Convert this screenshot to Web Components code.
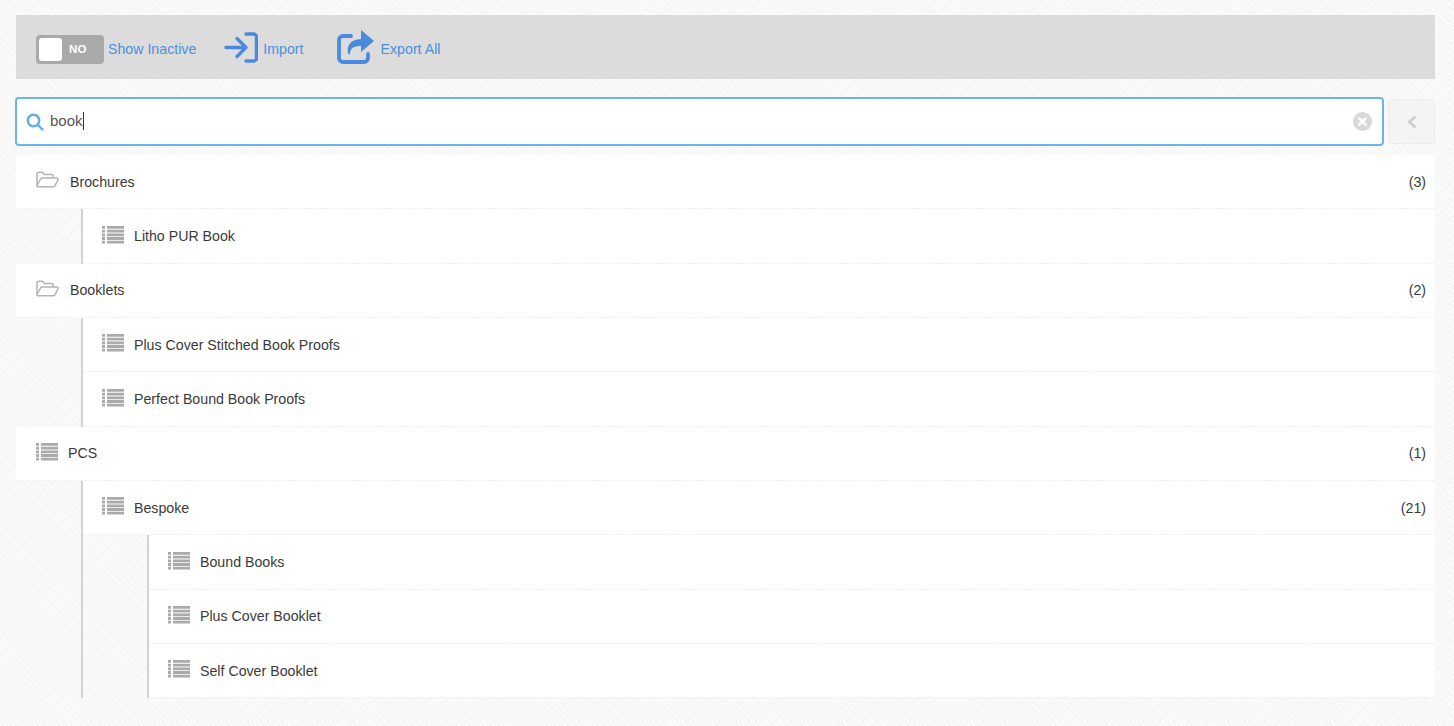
<!DOCTYPE html>
<html lang="en"><head><meta charset="utf-8"><title>Tree</title>
<style>
html,body{margin:0;height:100%}
body{height:726px;overflow:hidden;font:14px "Liberation Sans",Arial,sans-serif;color:#333;
background-color:#f8f8f8;background-image:repeating-linear-gradient(45deg,rgba(255,255,255,.55) 0 1px,transparent 1px 5px),repeating-linear-gradient(135deg,#fafafa 0 1px,#f4f4f4 1px 2px,#f9f9f9 2px 3px);}
app-shell{padding:15px 19px 0 16px}
</style></head><body>
<app-shell>
  <app-toolbar>
    <app-toggle></app-toggle>
    <app-action kind="show" label="Show Inactive"></app-action>
    <app-action kind="import" label="Import"></app-action>
    <app-action kind="export" label="Export All"></app-action>
  </app-toolbar>
  <app-search value="book"></app-search>
  <app-tree>
    <app-item icon="folder" label="Brochures" count="(3)" top>
      <app-item icon="list" label="Litho PUR Book"></app-item>
    </app-item>
    <app-item icon="folder" label="Booklets" count="(2)" top>
      <app-item icon="list" label="Plus Cover Stitched Book Proofs"></app-item>
      <app-item icon="list" label="Perfect Bound Book Proofs"></app-item>
    </app-item>
    <app-item icon="list" label="PCS" count="(1)" top>
      <app-item icon="list" label="Bespoke" count="(21)">
        <app-item icon="list" label="Bound Books"></app-item>
        <app-item icon="list" label="Plus Cover Booklet"></app-item>
        <app-item icon="list" label="Self Cover Booklet"></app-item>
      </app-item>
    </app-item>
  </app-tree>
</app-shell>
<script>
const def=(name,html,extra)=>{customElements.define(name,class extends HTMLElement{
  constructor(){super();this.attachShadow({mode:'open'}).innerHTML=html;}
  connectedCallback(){extra&&extra.call(this,this.shadowRoot);}
});};
const listIcon=`<svg width="22" height="18" viewBox="0 0 22 18" fill="#aaa"><path d="M0 0h3v2.800H0zM5 0h17v2.800H5zM0 3.700h3v2.800H0zM5 3.700h17v2.800H5zM0 7.400h3v2.800H0zM5 7.400h17v2.800H5zM0 11.100h3v2.800H0zM5 11.100h17v2.800H5zM0 14.800h3v2.800H0zM5 14.800h17v2.800H5z"/></svg>`;
const folderIcon=`<svg width="23" height="18" viewBox="0 0 23 18" fill="none" stroke="#b3b3b3" stroke-width="1.500" stroke-linejoin="round"><path d="M1 14.500V3a1.800 1.800 0 0 1 1.800-1.800h3.700l1.800 2.300h7a1.800 1.800 0 0 1 1.800 1.800v1.500"/><path d="M1 14.500 4.600 8a1.800 1.800 0 0 1 1.600-1h14.300c1.300 0 2 1 1.400 2l-3 5.800a2 2 0 0 1-1.700 1H2.400c-1 0-1.700-.7-1.400-1.300z"/></svg>`;
def('app-shell',`<style>:host{display:flex;flex-direction:column}</style><slot></slot>`);
def('app-toolbar',`<style>:host{display:flex;align-items:center;box-sizing:border-box;height:64px;background:#dcdcdc;padding:4px 0 0 20px}</style><slot></slot>`);
def('app-toggle',`<style>:host{display:flex;align-items:center;box-sizing:border-box;width:68px;height:29px;background:#a9a9a9;border-radius:4px;padding-left:3px}
.k{width:23px;height:23px;background:#fff;border-radius:3px}
.t{margin-left:7px;font:bold 11.500px "Liberation Sans",Arial,sans-serif;color:#fff;letter-spacing:.3px}</style><div class="k"></div><span class="t">NO</span>`);
const icons={
 import:`<svg width="35" height="31" viewBox="0 0 35 31" fill="none" stroke="#4a8ade" stroke-width="3.400" stroke-linecap="round" stroke-linejoin="round"><path d="M3 15.500h19M14 6.500l9 9-9 9"/><path d="M23 2h7.500a3 3 0 0 1 3 3v21a3 3 0 0 1-3 3H23"/></svg>`,
 export:`<svg width="38" height="34" viewBox="0 0 38 34" fill="none"><path d="M14 6H6a4 4 0 0 0-4 4v18a4 4 0 0 0 4 4h21a4 4 0 0 0 4-4v-4" stroke="#4a8ade" stroke-width="3.800" stroke-linecap="round"/><path fill="#4a8ade" d="M24 0l13 11-13 11v-6c-7 0-11 2-11 8-.6.900-1.500.500-2-1-1.500-8 3-13.500 13-14z"/></svg>`};
def('app-action',`<style>:host{display:flex;align-items:center;color:#4d8fe0;font-size:14.200px}
:host([kind=show]){margin-left:4px;margin-right:27px}
:host([kind=import]){margin-right:33px}
.i{display:flex}:host([kind=import]) .i{margin-right:5px}:host([kind=export]) .i{margin-right:6px}
:host([kind=export]) .i{margin-top:-4px}:host([kind=import]) .i{margin-top:-4px}</style><span class="i"></span><span class="l"></span>`,function(r){
  r.querySelector('.l').textContent=this.getAttribute('label');
  r.querySelector('.i').innerHTML=icons[this.getAttribute('kind')]||'';});
def('app-search',`<style>:host{display:flex;align-items:center;gap:4px;margin:18px 0 0 -1px;height:49px}
.box{flex:1;box-sizing:border-box;height:49px;display:flex;align-items:center;background:#fff;border:2px solid #6db3ec;border-radius:4px;padding:0 10px 0 9px}
.v{margin:-2px 0 0 6px;font-size:15px;color:#555;flex:1;display:flex;align-items:center}
.c{width:1px;height:18px;background:#333}
.b{box-sizing:border-box;width:47px;height:45px;border:1px solid #ececec;border-radius:3px;display:flex;align-items:center;justify-content:center;background:rgba(240,240,240,.55)}</style>
<div class="box"><svg width="18" height="18" viewBox="0 0 18 18" fill="none" stroke="#62ade8" stroke-width="2.400" stroke-linecap="round"><circle cx="7.500" cy="7.500" r="5.700"/><path d="M12 12l4.500 4.500"/></svg>
<span class="v"><span id="t"></span><span class="c"></span></span>
<svg width="19" height="19" viewBox="0 0 19 19"><circle cx="9.500" cy="9.500" r="9.500" fill="#d9d9d9"/><path d="M6.300 6.300l6.400 6.400M12.700 6.300l-6.400 6.400" stroke="#fff" stroke-width="2.600" stroke-linecap="round"/></svg></div>
<div class="b"><svg width="10" height="14" viewBox="0 0 10 14" fill="none" stroke="#cfcfcf" stroke-width="3"><path d="M8.500 1.500 2.500 7l6 5.500"/></svg></div>`,function(r){r.getElementById('t').textContent=this.getAttribute('value');});
def('app-tree',`<style>:host{display:block;margin-top:9px}</style><slot></slot>`);
def('app-item',`<style>:host{display:block}
.row{box-sizing:border-box;height:54.350px;display:flex;align-items:center;background:#fff;background-clip:padding-box;padding:0 9px 0 19px;border-bottom:1px dotted #f0f0f0;font-size:14.200px;color:#3a3a3a}
:host([top]) .row{padding-left:20px}
.i{display:flex;margin-right:10px;margin-top:-3px}
.i.folder{margin-right:11px}
.l{flex:1}
.kids{margin-left:64px;border-left:2px solid #d2d2d2}
:host([top]) .kids{margin-left:65px}
.kids.e{display:none}</style>
<div class="row"><span class="i"></span><span class="l"></span><span class="n"></span></div>
<div class="kids"><slot></slot></div>`,function(r){
  const ic=this.getAttribute('icon');const i=r.querySelector('.i');i.innerHTML=ic==='folder'?folderIcon:listIcon;i.classList.add(ic);
  r.querySelector('.l').textContent=this.getAttribute('label');
  r.querySelector('.n').textContent=this.getAttribute('count')||'';
  if(!this.children.length)r.querySelector('.kids').classList.add('e');
});
</script>
</body></html>
